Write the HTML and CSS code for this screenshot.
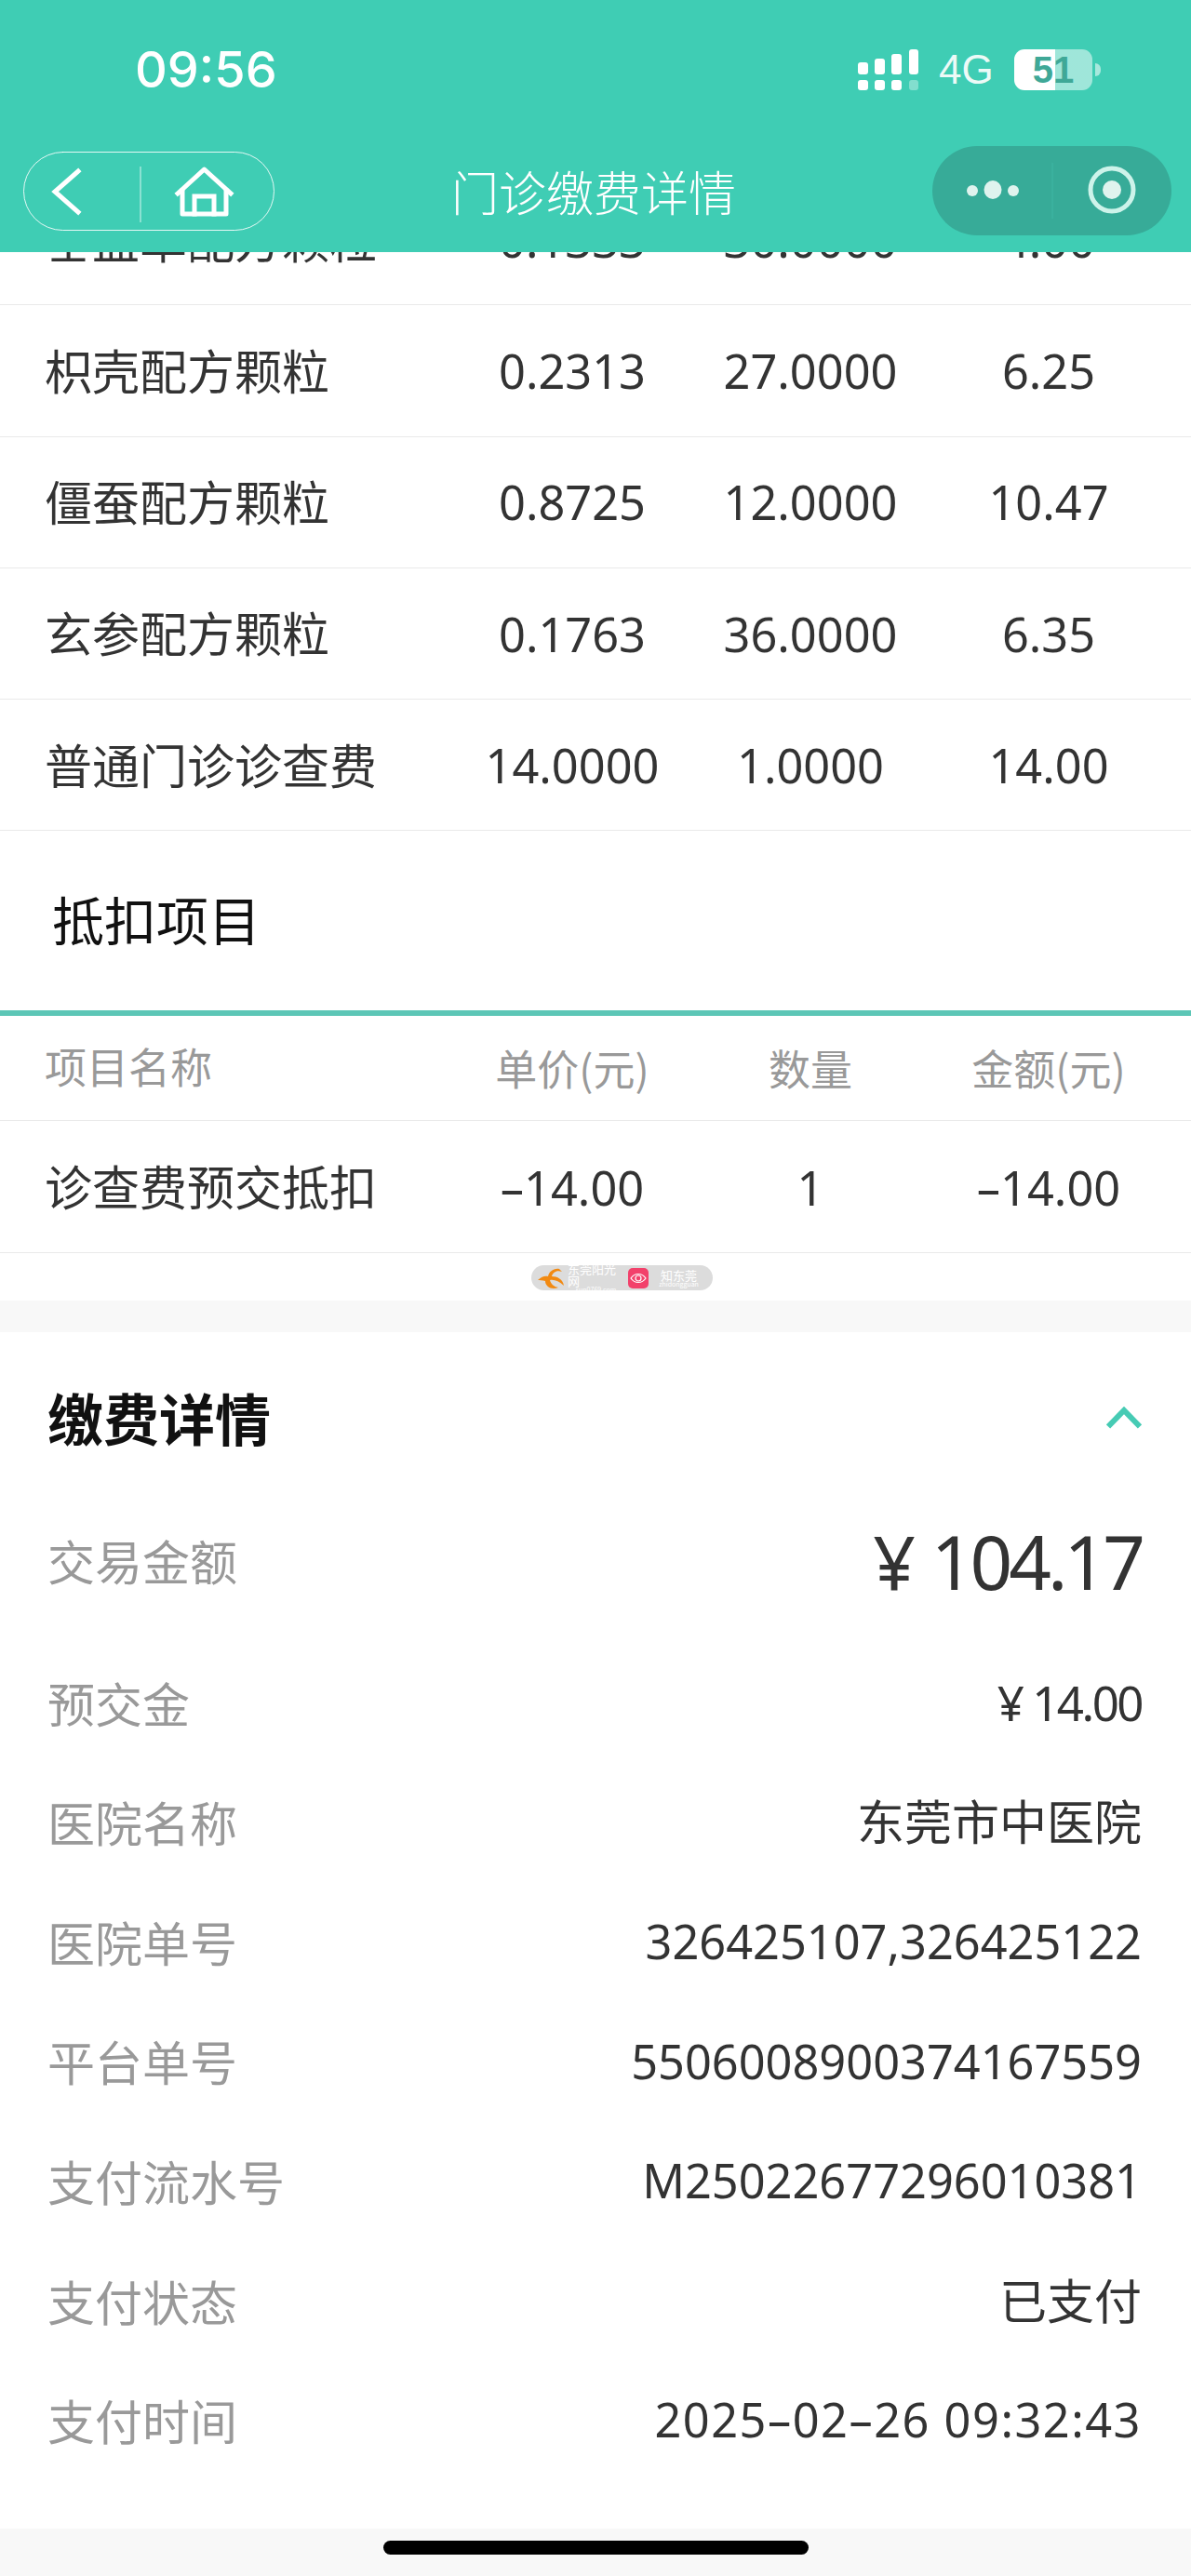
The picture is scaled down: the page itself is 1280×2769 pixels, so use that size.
FILE: index.html
```html
<!DOCTYPE html>
<html lang="zh-CN">

<head>
    <meta charset="UTF-8">
    <meta name="viewport" content="width=device-width, initial-scale=1.0">
    <title>门诊缴费详情</title>
    <link rel="stylesheet" href="styles.css">
</head>

<body>
    <!-- Top Bar -->
    <header class="top-bar">
        <div class="status-row">
            <span class="status-time">09:56</span>
            <div class="status-right">
                <svg class="signal-icon" viewBox="922 53 65 44" fill="#fff">
                    <rect x="922" y="67" width="11" height="13" rx="3"></rect>
                    <rect x="940" y="63" width="11" height="17" rx="3"></rect>
                    <rect x="958" y="58" width="11" height="22" rx="3"></rect>
                    <rect x="977" y="53" width="10" height="27" rx="3"></rect>
                    <rect x="922" y="86" width="11" height="11" rx="3"></rect>
                    <rect x="940" y="86" width="11" height="11" rx="3"></rect>
                    <rect x="958" y="86" width="11" height="11" rx="3"></rect>
                    <rect x="977" y="86" width="10" height="11" rx="3" opacity="0.35"></rect>
                </svg>
                <span class="network-text">4G</span>
                <div class="battery"><span>51</span></div>
            </div>
        </div>
        <div class="nav-row">
            <svg class="capsule-left" viewBox="25 162 270 85" fill="none" stroke="#fff" stroke-linecap="square">
                <rect x="25.5" y="162.5" width="269" height="84" rx="42" stroke-width="1" opacity="0.85"></rect>
                <line x1="151" y1="178" x2="151" y2="238" stroke-width="1" stroke-linecap="butt" opacity="0.8"></line>
                <polyline points="84,183 59,205 84,227" stroke-width="5"></polyline>
                <polyline points="191,207 219.5,181 248,207" stroke-width="5" stroke-linejoin="round"></polyline>
                <polyline points="196,204 196,229 243,229 243,204" stroke-width="5" stroke-linejoin="round"></polyline>
                <polyline points="209,229 209,210 230,210 230,229" stroke-width="5"></polyline>
            </svg>
            <h1 class="page-title">门诊缴费详情</h1>
            <svg class="capsule-right" viewBox="1002 158 257 96">
                <rect x="1002" y="158" width="257" height="96" rx="48" fill="#37ab98"></rect>
                <line x1="1131" y1="176" x2="1131" y2="236" stroke="#3fb7a3" stroke-width="1"></line>
                <circle cx="1045" cy="206" r="6" fill="#dff3ee"></circle>
                <ellipse cx="1067" cy="205" rx="9.5" ry="10" fill="#dff3ee"></ellipse>
                <circle cx="1089" cy="206" r="6" fill="#dff3ee"></circle>
                <circle cx="1195" cy="205" r="23" fill="none" stroke="#cdf3ea" stroke-width="5"></circle>
                <circle cx="1195" cy="205" r="10" fill="#dff3ee"></circle>
            </svg>
        </div>
    </header>

    <main class="page-body">
        <!-- Item List -->
        <section class="item-list">
            <div class="item-row">
                <span class="item-name">垂盆草配方颗粒</span><span>0.1333</span><span>30.0000</span><span>4.00</span>
            </div>
            <div class="item-row">
                <span class="item-name">枳壳配方颗粒</span><span>0.2313</span><span>27.0000</span><span>6.25</span>
            </div>
            <div class="item-row">
                <span class="item-name">僵蚕配方颗粒</span><span>0.8725</span><span>12.0000</span><span>10.47</span>
            </div>
            <div class="item-row">
                <span class="item-name">玄参配方颗粒</span><span>0.1763</span><span>36.0000</span><span>6.35</span>
            </div>
            <div class="item-row">
                <span class="item-name">普通门诊诊查费</span><span>14.0000</span><span>1.0000</span><span>14.00</span>
            </div>
        </section>

        <!-- Deduction -->
        <section class="deduct-section">
            <h2 class="deduct-title">抵扣项目</h2>
            <div class="item-row head-row">
                <span class="item-name">项目名称</span><span>单价(元)</span><span>数量</span><span>金额(元)</span>
            </div>
            <div class="item-row deduct-row">
                <span class="item-name">诊查费预交抵扣</span><span>–14.00</span><span>1</span><span>–14.00</span>
            </div>
            <div class="mark-row">
                <div class="mark-pill">
                    <svg class="mark-logo" viewBox="0 0 30 24">
                        <path d="M1 14C5 10 9 9 12 10C13 5 18 1 24 2L27 5C21 3 17 6 16 10C22 10 28 13 29 20C24 15 18 13 14 14C15 18 18 21 23 22C16 25 9 21 9 15C6 14 3 14 1 14Z" fill="#f28a12"></path>
                    </svg>
                    <div class="mark-text">
                        <span class="mark-main">东莞阳光网</span>
                        <span class="mark-sub">sun0769.com</span>
                    </div>
                    <div class="mark-eye">
                        <svg viewBox="0 0 22 22" fill="none" stroke="#fff" stroke-width="1.2">
                            <path d="M3 11C7 5 15 5 19 11C15 17 7 17 3 11Z"></path>
                            <circle cx="11" cy="11" r="3"></circle>
                        </svg>
                    </div>
                    <div class="mark-text">
                        <span class="mark-main">知东莞</span>
                        <span class="mark-sub">zhidongguan</span>
                    </div>
                </div>
            </div>
        </section>

        <div class="gap-band"></div>

        <!-- Payment Details -->
        <section class="pay-card">
            <div class="pay-head">
                <h2 class="pay-title">缴费详情</h2>
                <svg class="pay-chevron" viewBox="0 0 38 24" fill="none" stroke="#46cbb4" stroke-width="6">
                    <polyline points="2,21.5 19,4 36,21.5"></polyline>
                </svg>
            </div>
            <div class="pay-row amount-row">
                <span class="pay-label">交易金额</span>
                <span class="amount-value">¥ 104.17</span>
            </div>
            <div class="pay-row">
                <span class="pay-label">预交金</span>
                <span class="pay-value money-value">¥ 14.00</span>
            </div>
            <div class="pay-row">
                <span class="pay-label">医院名称</span>
                <span class="pay-value">东莞市中医院</span>
            </div>
            <div class="pay-row">
                <span class="pay-label">医院单号</span>
                <span class="pay-value number-value">326425107,326425122</span>
            </div>
            <div class="pay-row">
                <span class="pay-label">平台单号</span>
                <span class="pay-value number-value">5506008900374167559</span>
            </div>
            <div class="pay-row">
                <span class="pay-label">支付流水号</span>
                <span class="pay-value number-value">M25022677296010381</span>
            </div>
            <div class="pay-row">
                <span class="pay-label">支付状态</span>
                <span class="pay-value">已支付</span>
            </div>
            <div class="pay-row">
                <span class="pay-label">支付时间</span>
                <span class="pay-value date-value">2025–02–26 09:32:43</span>
            </div>
        </section>

        <div class="home-band">
            <div class="home-bar"></div>
        </div>
    </main>
</body>

</html>
```

FILE: styles.css
```css
* {
    box-sizing: border-box;
}

body {
    margin: 0;
    padding: 0;
    width: 1280px;
    height: 2769px;
    overflow: hidden;
    background-color: #fff;
    color: #333;
    font-family: "Noto Sans", "Noto Sans CJK SC", sans-serif;
    font-size: 51px;
}

h1,
h2 {
    margin: 0;
    font-weight: 400;
}
/* Top Bar */

.top-bar {
    position: relative;
    z-index: 10;
    height: 271px;
    background-color: #3fcdb4;
    color: #fff;
}

.status-row {
    display: flex;
    justify-content: space-between;
    align-items: center;
    height: 150px;
    padding: 0 106px 0 145px;
}

.status-time {
    font-family: "Inter", sans-serif;
    font-size: 54px;
    font-weight: 500;
    line-height: 1;
}

.status-right {
    display: flex;
    align-items: center;
}

.signal-icon {
    width: 65px;
    height: 44px;
    margin-right: 22px;
}

.network-text {
    width: 81px;
    font-family: "Liberation Sans", sans-serif;
    font-size: 44px;
    line-height: 1;
    opacity: 0.9;
}

.battery {
    position: relative;
    display: flex;
    justify-content: center;
    align-items: center;
    width: 84px;
    height: 44px;
    border-radius: 11px;
    background: linear-gradient(90deg, #fff 52%, rgba(255, 255, 255, 0.5) 52%);
    color: #3fa897;
    font-family: "Liberation Sans", sans-serif;
    font-size: 40px;
    font-weight: 700;
    line-height: 1;
}

.battery::after {
    content: "";
    position: absolute;
    top: 15px;
    right: -9px;
    width: 6px;
    height: 14px;
    border-radius: 0 7px 7px 0;
    background: rgba(255, 255, 255, 0.55);
}

.nav-row {
    display: grid;
    grid-template-columns: 270px 1fr 257px;
    align-items: center;
    height: 110px;
    padding: 0 21px 0 25px;
}

.capsule-left {
    width: 270px;
    height: 85px;
}

.capsule-right {
    width: 257px;
    height: 96px;
}

.page-title {
    padding-right: 21px;
    font-family: "Noto Sans CJK SC", sans-serif;
    font-size: 51px;
    font-weight: 300;
    line-height: 1;
    text-align: center;
}
/* Item List */

.item-list {
    margin-top: -84px;
}

.item-row {
    display: grid;
    grid-template-columns: 439px 256px 256px 256px;
    align-items: center;
    height: 141.25px;
    padding: 0 25px 0 48px;
    border-bottom: 1px solid #e9e9e9;
    font-size: 50.5px;
    line-height: 1;
    text-align: center;
}

.item-row span {
    padding-top: 2px;
}

.item-row .item-name {
    padding: 0 0 2px;
    font-family: "Noto Sans CJK SC", sans-serif;
    font-size: 51px;
    text-align: left;
}
/* Deduction */

.deduct-title {
    display: flex;
    align-items: center;
    height: 199px;
    padding: 0 0 6px 56px;
    border-bottom: 6px solid #5cc6b6;
    color: #111;
    font-family: "Noto Sans CJK SC", sans-serif;
    font-size: 56px;
}

.head-row {
    height: 113px;
    padding-bottom: 4px;
    color: #999;
    font-family: "Noto Sans CJK SC", sans-serif;
    font-size: 45px;
}

.item-row.head-row .item-name {
    font-size: 45px;
}

.deduct-row {
    height: 142px;
}

.mark-row {
    display: flex;
    justify-content: center;
    height: 51px;
    padding: 13px 0 0 57px;
}

.mark-pill {
    display: flex;
    align-items: center;
    width: 195px;
    height: 27px;
    padding: 0 6px;
    border-radius: 14px;
    background-color: #dcdcdc;
    color: #fff;
}

.mark-logo {
    flex: none;
    width: 30px;
    height: 24px;
    margin-right: 3px;
}

.mark-text {
    display: flex;
    flex-direction: column;
    align-items: center;
    width: 67px;
    font-family: "Noto Sans CJK SC", sans-serif;
    line-height: 1;
}

.mark-main {
    font-size: 13px;
}

.mark-sub {
    font-size: 7px;
}

.mark-eye {
    flex: none;
    width: 22px;
    height: 22px;
    margin: 0 2px 0 4px;
    border-radius: 5px;
    background-color: #f2416b;
}

.mark-eye svg {
    display: block;
}

.gap-band {
    height: 34px;
    background-color: #f8f8f8;
}
/* Payment Details */

.pay-card {
    padding: 0 53px 51px 51px;
}

.pay-head {
    display: flex;
    justify-content: space-between;
    align-items: center;
    height: 184px;
}

.pay-title {
    padding-bottom: 4px;
    color: #111;
    font-family: "Noto Sans CJK SC", sans-serif;
    font-size: 60px;
    font-weight: 700;
}

.pay-chevron {
    width: 38px;
    height: 24px;
}

.pay-row {
    display: flex;
    justify-content: space-between;
    align-items: center;
    height: 128.6px;
    padding-bottom: 3px;
    line-height: 1;
}

.amount-row {
    height: 126px;
    margin-bottom: 25px;
}

.pay-label {
    color: #999;
    font-family: "Noto Sans CJK SC", sans-serif;
}

.pay-value {
    color: #333;
}

.number-value {
    font-size: 50.5px;
}

.money-value {
    letter-spacing: -2.5px;
}

.date-value {
    font-size: 50.5px;
    letter-spacing: 1.5px;
}

.amount-value {
    font-size: 80px;
    letter-spacing: -4px;
    word-spacing: 4px;
}

.home-band {
    display: flex;
    justify-content: center;
    height: 52px;
    padding-top: 13px;
    background-color: #f8f8f8;
}

.home-bar {
    width: 457px;
    height: 15px;
    border-radius: 8px;
    background-color: #000;
}
```
